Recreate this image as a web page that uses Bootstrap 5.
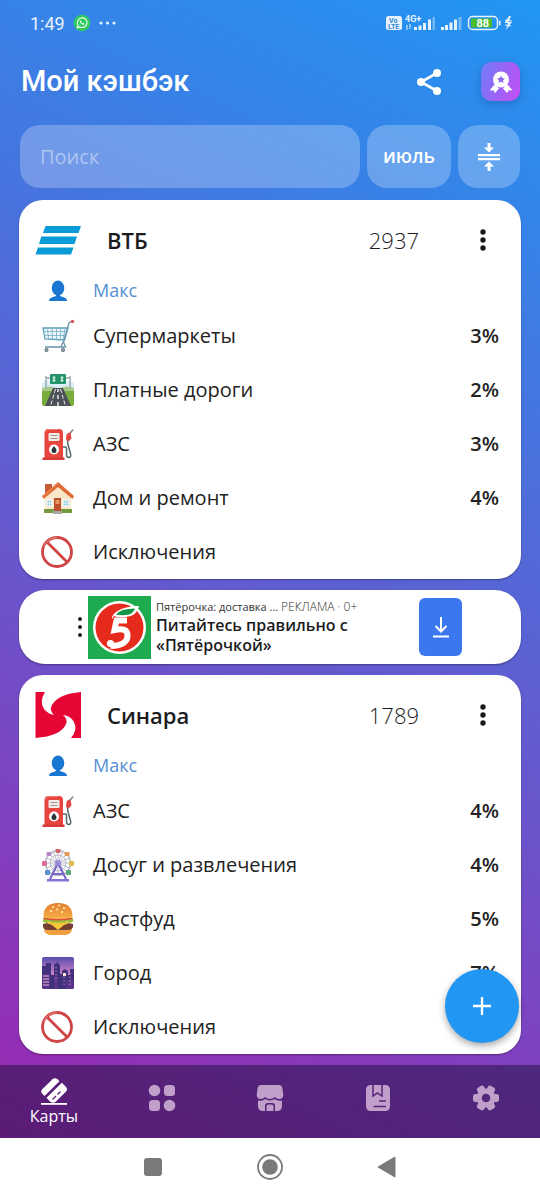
<!DOCTYPE html>
<html lang="ru">
<head>
<meta charset="utf-8">
<meta name="viewport" content="width=device-width, initial-scale=1">
<title>Мой кэшбэк</title>
<link href="https://cdn.jsdelivr.net/npm/bootstrap@5.3.0/dist/css/bootstrap.min.css" rel="stylesheet">
<style>
  body { font-family: "Open Sans", "Noto Sans", sans-serif; color: #1c1c1e; background: #fff; }
  svg { display: block; flex: none; }
  .app-shell { background: linear-gradient(205deg, #2196f3, #9c27b0); }
  .status-bar { height: 46px; padding: 0 26px 0 30px; font-family: Roboto, sans-serif; font-size: 18px; color: #e6f3fd; }
  .app-header { padding: 16px 20px 24px 21px; }
  .app-title { font-family: Roboto, sans-serif; font-weight: 500; font-size: 29px; line-height: 39px; color: #fff; }
  .award-btn { width: 39px; height: 39px; border-radius: 10px; background: linear-gradient(110deg, #6f7cfa, #c44df2); box-shadow: 0 3px 8px rgba(20,50,120,.3); }
  .tool-row { padding: 0 20px; gap: 7px; }
  .glass { height: 63px; border: 0; border-radius: 20px; background: rgba(255,255,255,.25); color: #fff; }
  .glass-input { padding: 0 20px; font-size: 20px; }
  .glass-input::placeholder { color: rgba(255,255,255,.45); }
  .glass-input:focus { outline: 2px solid #fff; }
  .month-btn { width: 84px; font-size: 19px; font-weight: 600; }
  .sort-btn { width: 62px; }
  .feed { padding: 12px 19px 11px; gap: 11px; }
  .panel { background: #fff; border-radius: 24px; box-shadow: 0 1px 2px rgba(0,0,0,.35); }
  .panel-head { padding: 16px 16px 8px; }
  .bank-logo { width: 48px; height: 48px; margin-right: 24px; }
  .bank-name { font-size: 22px; font-weight: 600; line-height: 48px; }
  .card-num { font-size: 22px; font-weight: 300; margin-right: 42px; }
  .menu-btn { width: 44px; height: 44px; }
  .line-row { padding: 0 22px; height: 54px; font-size: 20px; color: #222; }
  .line-row svg { width: 34px; height: 34px; margin-right: 18px; }
  .owner-row { height: 37px; font-size: 18px; color: #5590d4; }
  .owner-row svg { width: 34px; height: 22px; }
  .rate { font-size: 20px; font-weight: 600; }
  .ad-panel { height: 74px; padding: 0 59px 0 57px; border-radius: 26px; }
  .ad-text { margin: 0 0 0 5px; line-height: 20px; }
  .ad-source { font-size: 11px; line-height: 16px; color: #333; }
  .ad-mark { font-size: 12px; font-weight: 300; }
  .ad-head { font-size: 16px; font-weight: 600; line-height: 20px; color: #1c1c1e; }
  .ad-get { width: 43px; height: 58px; border-radius: 6px; background: #3b78f0; }
  .fab { right: 21px; bottom: 22px; width: 74px; height: 74px; background: #2196f3; box-shadow: 0 3px 7px rgba(0,0,0,.35); }
  .tab-bar { height: 73px; background: rgba(28,15,60,.5); }
  .tab-bar a { color: #c0a0ca; font-size: 16px; line-height: 22px; }
  .tab-bar a.active { color: #fff; }
  .tab-gap { padding-bottom: 8px; }
  .system-bar { height: 62px; background: #fff; padding: 0 94px 4px; }
</style>
</head>
<body class="min-vh-100 d-flex flex-column">

<svg width="0" height="0" class="position-absolute" aria-hidden="true">
  <defs>
    <linearGradient id="bun" x1="0" y1="0" x2="0" y2="1"><stop offset="0" stop-color="#e07e2c"/><stop offset="1" stop-color="#f8b14b"/></linearGradient>
    <linearGradient id="dusk" x1="0" y1="0" x2="0" y2="1"><stop offset="0" stop-color="#5a4cb0"/><stop offset=".5" stop-color="#c67fc4"/><stop offset="1" stop-color="#f08a8a"/></linearGradient>
  </defs>
  <symbol id="person" viewBox="0 0 34 22"><ellipse cx="17" cy="8" rx="6.3" ry="7.6" fill="#1976d2"/><path d="M8 21q0-3 4-4l3-1v-3h4v3l3 1q4 1 4 4z" fill="#1976d2"/></symbol>
  <symbol id="cart" viewBox="0 0 34 34">
    <path d="M2 9h25l-3.500 12L4 20z" fill="#eef8fc" stroke="#5c9fba" stroke-width="1.300"/>
    <path d="M6.500 9l1 11M11 9l.6 11M15.500 9v11.500M20 9l-.8 12M24 9l-2 12M2.500 12.500H26M3 16.500h22" stroke="#7db4ca" stroke-width=".9" fill="none"/>
    <path d="M31 2l-3 2-5.500 19 2 5H4M22 23l-2 5" fill="none" stroke="#6a93a8" stroke-width="1.300"/>
    <circle cx="31.500" cy="2.500" r="1.700" fill="#d4545f"/><circle cx="5.500" cy="31" r="2" fill="#58707c"/><circle cx="22" cy="31" r="2" fill="#58707c"/><circle cx="5.500" cy="31" r=".8" fill="#dde"/><circle cx="22" cy="31" r=".8" fill="#dde"/>
  </symbol>
  <symbol id="road" viewBox="0 0 34 34">
    <path d="M1 15h32v16q0 2-2 2H3q-2 0-2-2z" fill="#79ad3e"/><path d="M1 10q3-4 8-2l16 1q5-2 8 1v5H1z" fill="#d9eef7"/>
    <path d="M1 15q8-3 14 0h4q7-3 14 0v3H1z" fill="#a9c98c"/>
    <path d="M12 15h10l8 18H4z" fill="#4c5258"/><path d="M17 16v3m0 3v4m0 3v4" stroke="#fff" stroke-width="1.300"/><path d="M14.500 16L9.500 33M19.500 16l5 17" stroke="#fff" stroke-width=".9" stroke-dasharray="4 2"/>
    <path d="M5 3v12M29 3v12M5 5h5m14 0h5" stroke="#9aa5ad" stroke-width="1.400"/>
    <rect x="9" y="1" width="16" height="10" rx="1" fill="#24936a"/><path d="M13 3v6M21 3v6M11.500 5h3M19.500 5h3M11.500 7.500h3M19.500 7.500h3" stroke="#dff5ea" stroke-width="1.200"/>
  </symbol>
  <symbol id="fuel" viewBox="0 0 34 34">
    <path d="M22 20h2.500q1 0 1 1.500v6q0 3 2.200 3t2-3L26.800 17l-.3-5" fill="none" stroke="#566970" stroke-width="1.500"/>
    <path d="M27 9l5-6.500" stroke="#7c898e" stroke-width="1.500"/><path d="M25.500 8q1-3 4-2.500l1 6-3 3-2.500-2z" fill="#de4840"/>
    <path d="M3.500 6q0-4 4-4h10.500q4 0 4 4v25h-18.500z" fill="#e8453f"/><path d="M1.500 30.500h22V33h-22z" fill="#d63a36"/><path d="M4 6q.5-3.500 4-3.500h9" fill="none" stroke="#f77a70" stroke-width="1"/>
    <rect x="7.500" y="6" width="11" height="8" rx="1" fill="#f3ece8"/><path d="M9.500 8.500h7m-7 3h7" stroke="#a49490"/>
    <circle cx="13" cy="22.500" r="5" fill="#fff"/><path d="M13 19q2.500 3 2.500 4.500a2.500 2.500 0 0 1-5 0q0-1.500 2.500-4.500z" fill="#29343a"/>
  </symbol>
  <symbol id="house" viewBox="0 0 34 34">
    <path d="M4 3h7v9H4z" fill="#c85b38"/><path d="M4 15L17 4l13 11v14H4z" fill="#f8e8c9"/>
    <path d="M17 1L1 15l1.500 3L17 6l14.500 12 1.500-3z" fill="#e06a35"/><path d="M17 2L2 15.500" stroke="#f59a62" fill="none"/>
    <path d="M3 28h28v4H3z" fill="#739a3c"/><rect x="13" y="17" width="7" height="14" fill="#ba5030"/><path d="M14.500 19h4v4h-4z" fill="#e7965f"/>
    <path d="M6 19h5v6H6zM22 19h6v6h-6z" fill="#91cce1" stroke="#fff"/><path d="M8.500 19v6M25 19v6M6 22h5M22 22h6" stroke="#fff" stroke-width=".7"/>
    <path d="M12 30h9v3h-9z" fill="#aaa8a6"/>
  </symbol>
  <symbol id="ban" viewBox="0 0 34 34"><g fill="none" stroke="#cf4545" stroke-width="2.800"><circle cx="16" cy="17" r="14.500"/><path d="M5.700 6.700l20.600 20.600"/></g><path d="M3 12A14.500 14.500 0 0 1 16 2.500" fill="none" stroke="#e88c87" stroke-width="1"/></symbol>
  <symbol id="wheel" viewBox="0 0 34 34">
    <g fill="none" stroke="#b9b9ca" stroke-width="1"><circle cx="17" cy="15" r="12.500" stroke-width="1.500"/><circle cx="17" cy="15" r="8"/><path d="M17 2v26M4 15h26M8 6l18 18M26 6L8 24M12 3.500l10 23M22 3.500l-10 23M5.500 10l23 10M5.500 20l23-10"/></g>
    <g><rect x="14.500" y="1" width="5" height="4" rx="1" fill="#d26866"/><rect x="23.500" y="4" width="5" height="4" rx="1" fill="#e09955"/><rect x="5.500" y="4" width="5" height="4" rx="1" fill="#b387c8"/><rect x="1" y="13" width="5" height="5" rx="1" fill="#dc6c92"/><rect x="28" y="13" width="5" height="5" rx="1" fill="#dfbd4f"/><rect x="4" y="22" width="5" height="5" rx="1" fill="#5c8ed0"/><rect x="25" y="22" width="5" height="5" rx="1" fill="#59a879"/></g>
    <path d="M17 15L9 31M17 15l8 16M12 26h10" fill="none" stroke="#7a67c8" stroke-width="2.200"/><path d="M6 31h22v2.500H6z" fill="#8873d2"/><circle cx="17" cy="15" r="3" fill="#9a8adb"/>
  </symbol>
  <symbol id="burger" viewBox="0 0 34 34">
    <path d="M3 26h28q0 7-7 7H10q-7 0-7-7z" fill="#f2a03f"/><path d="M2 22q15-5 30 0v3q-1 3-5 3H7q-4 0-5-3z" fill="#744034"/>
    <path d="M3 20h28l-8 3-6 5-6-5z" fill="#fcc83a"/><path d="M2 17q15-4 30 0 1 3-2 3.500-2 0-4-1-3 2-6 1-3 1-6 0-3 1-6-1-2 1.500-4 1-3-.5-2-3.500z" fill="#99bd3c"/>
    <path d="M2.500 17q15 3 29 0v-1.500h-29z" fill="#dc4e38"/><path d="M2.500 15.500Q2 1 17 1t14.500 14.500q-14 3-29 0z" fill="url(#bun)"/>
    <g fill="#ffe5a6"><ellipse cx="12" cy="5" rx="1.300" ry=".9"/><ellipse cx="18" cy="3.500" rx="1.300" ry=".9"/><ellipse cx="23" cy="6" rx="1.300" ry=".9"/><ellipse cx="10" cy="9" rx="1.300" ry=".9"/><ellipse cx="16" cy="7.500" rx="1.300" ry=".9"/><ellipse cx="21" cy="10" rx="1.300" ry=".9"/></g>
  </symbol>
  <symbol id="city" viewBox="0 0 34 34">
    <rect x="1" y="1" width="32" height="32" rx="2" fill="url(#dusk)"/><path d="M1 10h4v-3h5v12h3V9l3-3 3 3v9h2v-3l3-2 3 2v4h2v-6h4v18q0 2-2 2H3q-2 0-2-2z" fill="#41307c"/>
    <path d="M1 18h8v15H3q-2 0-2-2zM13 20h4v13h-4zM25 24h8v7q0 2-2 2h-6z" fill="#57348a"/>
    <path d="M2 20h6m-6 3h6m-6 3h6m-6 3h6" stroke="#efb6d0" stroke-width="1"/><path d="M15 11v15M23 17v12M29 17v12" stroke="#bb85bb" stroke-dasharray="1.500 2"/><path d="M22 17h3v3h-3z" fill="#ffe0c8"/>
  </symbol>
  <symbol id="dots" viewBox="0 0 8 24"><circle cx="4" cy="4" r="2.700"/><circle cx="4" cy="12" r="2.700"/><circle cx="4" cy="20" r="2.700"/></symbol>
</svg>

<div class="app-shell flex-grow-1 d-flex flex-column">
  <div class="status-bar d-flex align-items-center justify-content-between">
    <div class="d-flex align-items-center">
      <span>1:49</span>
      <svg class="ms-2" width="18" height="18" viewBox="0 0 18 18"><circle cx="9" cy="9" r="8.300" fill="#2ecc5f"/><path d="M4.300 13.700l.8-2.600a4.800 4.800 0 1 1 1.900 1.800z" fill="none" stroke="#fff" stroke-width="1.100"/><path d="M7.200 6.400q-1 .9.300 2.600t3.200 1.900l.9-1-1.500-.9-.8.600-1.300-1.500.5-.7z" fill="#fff"/></svg>
      <svg class="ms-2" width="17" height="4" viewBox="0 0 17 4" fill="#e6f3fd"><circle cx="2" cy="2" r="1.600"/><circle cx="8.500" cy="2" r="1.600"/><circle cx="15" cy="2" r="1.600"/></svg>
    </div>
    <svg width="130" height="20" viewBox="0 0 130 20" fill="#e6f3fd" font-family="Roboto, sans-serif" font-weight="700">
      <rect x="2" y="3" width="16" height="14" rx="2.500"/><text x="5" y="9.500" font-size="7" fill="#3489dc">Vo</text><text x="4" y="16" font-size="7" fill="#3489dc">LTE</text>
      <text x="21" y="9" font-size="9">4G+</text>
      <path d="M23 12v5M26 11v5" stroke="#e6f3fd" stroke-width="1"/><path d="M30 14h3v3h-3zM34.500 12.500h3V17h-3zM39 10h3v7h-3zM44 6.500h3V17h-3z"/><path d="M48.500 4h2.500v13h-2.500z" opacity=".4"/>
      <path d="M57 14h3v3h-3zM61 12h3v5h-3zM65.500 9.500h3V17h-3zM70 6.500h3V17h-3z"/><path d="M74.500 4h3v13h-3z" opacity=".4"/>
      <rect x="84.500" y="3.500" width="29" height="13" rx="4" fill="none" stroke="#e6f3fd" stroke-width="1.500"/><rect x="87" y="5.500" width="21" height="9" rx="1" fill="#4bbb2e"/><rect x="115" y="7.500" width="1.500" height="5" rx=".7"/>
      <text x="92.500" y="14" font-size="11" fill="#fff">88</text><path d="M125 3l-4.500 7h3.500l-2 7 6-8h-3.500l2.500-6z"/><path d="M121 7l7 1M121 12l6 1" stroke="#e6f3fd"/>
    </svg>
  </div>

  <header class="app-header d-flex align-items-center">
    <h1 class="app-title m-0 flex-grow-1">Мой кэшбэк</h1>
    <button type="button" class="btn p-0 border-0 me-4" aria-label="Поделиться">
      <svg class="me-3" width="24" height="28" viewBox="1 0 24 28" fill="#fff"><path d="M21 5L5 14l16 9" fill="none" stroke="#fff" stroke-width="2.600"/><circle cx="21" cy="5" r="4"/><circle cx="5" cy="14" r="4"/><circle cx="21" cy="23" r="4"/></svg>
    </button>
    <button type="button" class="btn award-btn p-0 border-0 d-flex align-items-center justify-content-center" aria-label="Награды">
      <svg width="24" height="24" viewBox="0 0 24 24" fill="#fff"><path d="M5.500 15l4 3.500-3.500 4-1.200-2.700-3.300.2zM18.500 15l-4 3.500 3.500 4 1.200-2.700 3.300.2z" stroke="#fff" stroke-linejoin="round"/><circle cx="12" cy="9.500" r="8"/><path d="M12 5.500l1.200 2.500 2.800.4-2 1.900.5 2.700-2.500-1.300L9.500 13l.5-2.700-2-1.900 2.800-.4z" fill="#9468f4"/></svg>
    </button>
  </header>

  <div class="tool-row d-flex">
    <input type="search" class="glass glass-input flex-grow-1 w-100" placeholder="Поиск" aria-label="Поиск">
    <button type="button" class="btn glass month-btn p-0 flex-shrink-0">июль</button>
    <button type="button" class="btn glass sort-btn p-0 flex-shrink-0 d-flex align-items-center justify-content-center" aria-label="Свернуть карты">
      <svg width="22" height="28" viewBox="0 0 22 28" fill="#fff"><path d="M0 11h22v2.300H0zM0 15h22v2.300H0zM9.500 0h3v4.500H16L11 9.500 6 4.500h3.500zM9.500 28h3v-4.500H16L11 18.500l-5 5h3.500z"/></svg>
    </button>
  </div>

  <main class="feed flex-grow-1 d-flex flex-column position-relative">
    <section class="panel">
      <div class="panel-head d-flex align-items-center">
        <svg class="bank-logo" viewBox="0 0 48 48" fill="#089bd7"><path d="M10.500 10H46l-2.500 7H8zM6.300 20.500H42L39.500 28H4zM3 31.500h35.500L36 38.500H.5z"/></svg>
        <h2 class="bank-name m-0 flex-grow-1">ВТБ</h2>
        <span class="card-num">2937</span>
        <button type="button" class="btn menu-btn p-0 border-0 d-flex align-items-center justify-content-center" aria-label="Меню карты ВТБ"><svg width="8" height="24" fill="#1c1c1e"><use href="#dots"/></svg></button>
      </div>
      <div class="line-row owner-row d-flex align-items-center"><svg><use href="#person"/></svg>Макс</div>
      <ul class="list-unstyled m-0">
        <li class="line-row d-flex align-items-center"><svg><use href="#cart"/></svg><span class="flex-grow-1">Супермаркеты</span><span class="rate">3%</span></li>
        <li class="line-row d-flex align-items-center"><svg><use href="#road"/></svg><span class="flex-grow-1">Платные дороги</span><span class="rate">2%</span></li>
        <li class="line-row d-flex align-items-center"><svg><use href="#fuel"/></svg><span class="flex-grow-1">АЗС</span><span class="rate">3%</span></li>
        <li class="line-row d-flex align-items-center"><svg><use href="#house"/></svg><span class="flex-grow-1">Дом и ремонт</span><span class="rate">4%</span></li>
        <li class="line-row d-flex align-items-center"><svg><use href="#ban"/></svg><span class="flex-grow-1">Исключения</span></li>
      </ul>
    </section>

    <section class="panel ad-panel d-flex align-items-center">
      <button type="button" class="btn p-0 border-0 me-1" aria-label="Меню рекламы"><svg width="8" height="24" viewBox="0 0 8 24" fill="#1c1c1e"><circle cx="4" cy="4" r="2"/><circle cx="4" cy="12" r="2"/><circle cx="4" cy="20" r="2"/></svg></button>
      <svg width="63" height="63" viewBox="0 0 63 63"><path d="M0 0h63v63H0z" fill="#1eaa4e"/><circle cx="31.500" cy="31.500" r="26.500" fill="#fff"/><circle cx="31.500" cy="31.500" r="24" fill="#e62b1c"/>
        <path d="M39 24.500H28.500L26.500 34q13-3 13 5.500 0 10-17 10.500" fill="none" stroke="#fff" stroke-width="6"/><circle cx="22.500" cy="47.500" r="3.600" fill="#fff"/>
        <path d="M24 21q4-9 23-11h4q-2 10-13 11-8 1-12-1l-2 3z" fill="#fff"/><path d="M28 18.500q4-6 19-6-2 6-9 6.500-6 .5-10-.5z" fill="#159447"/></svg>
      <div class="ad-text flex-grow-1">
        <div class="ad-source text-nowrap">Пятёрочка: доставка ... <span class="ad-mark">РЕКЛАМА · 0+</span></div>
        <div class="ad-head">Питайтесь правильно с<br>«Пятёрочкой»</div>
      </div>
      <button type="button" class="btn ad-get p-0 border-0 flex-shrink-0 d-flex align-items-center justify-content-center" aria-label="Скачать"><svg width="18" height="22" viewBox="0 0 18 22" fill="none" stroke="#fff" stroke-width="2"><path d="M9 1v14M3.500 10L9 15.500l5.500-5.500M1 20.500h16"/></svg></button>
    </section>

    <section class="panel">
      <div class="panel-head d-flex align-items-center">
        <svg class="bank-logo" viewBox="0 0 48 48" fill="#e50635"><path d="M.5 1H10Q4 11 9 18 13 23 19 24 14 19 17 14 23 3 46 1V47H36Q43 39 39 31 36 25 28 24 33 28 31 33 26 45 .5 47Z"/></svg>
        <h2 class="bank-name m-0 flex-grow-1">Синара</h2>
        <span class="card-num">1789</span>
        <button type="button" class="btn menu-btn p-0 border-0 d-flex align-items-center justify-content-center" aria-label="Меню карты Синара"><svg width="8" height="24" fill="#1c1c1e"><use href="#dots"/></svg></button>
      </div>
      <div class="line-row owner-row d-flex align-items-center"><svg><use href="#person"/></svg>Макс</div>
      <ul class="list-unstyled m-0">
        <li class="line-row d-flex align-items-center"><svg><use href="#fuel"/></svg><span class="flex-grow-1">АЗС</span><span class="rate">4%</span></li>
        <li class="line-row d-flex align-items-center"><svg><use href="#wheel"/></svg><span class="flex-grow-1">Досуг и развлечения</span><span class="rate">4%</span></li>
        <li class="line-row d-flex align-items-center"><svg><use href="#burger"/></svg><span class="flex-grow-1">Фастфуд</span><span class="rate">5%</span></li>
        <li class="line-row d-flex align-items-center"><svg><use href="#city"/></svg><span class="flex-grow-1">Город</span><span class="rate">7%</span></li>
        <li class="line-row d-flex align-items-center"><svg><use href="#ban"/></svg><span class="flex-grow-1">Исключения</span></li>
      </ul>
    </section>

    <button type="button" class="btn fab p-0 border-0 rounded-circle position-absolute d-flex align-items-center justify-content-center" aria-label="Добавить карту"><svg width="18" height="18" viewBox="0 0 18 18" stroke="#fff" stroke-width="2.300"><path d="M9 0v18M0 9h18"/></svg></button>
  </main>

  <nav class="tab-bar d-flex">
    <a href="#" class="active w-100 text-decoration-none d-flex flex-column align-items-center justify-content-center">
      <svg width="28" height="28" viewBox="0 0 28 28" fill="#fff"><path d="M1 26h26v1.800H1z"/><path d="M2.500 12L12.500 2.200q2.500-2 5 0l2 2L4.500 19l-2-2q-2.500-2.500 0-5z"/><path d="M6.500 20.800L21.800 5.700l4 4q2.500 2.500 0 5L15.500 25q-2.500 1.500-5 0z"/><path d="M12.500 22.500l3.500-3.500M17.500 17.500l3-3" stroke="#5f2078" stroke-width="1.400"/></svg>
      <span>Карты</span>
    </a>
    <a href="#" class="tab-gap w-100 d-flex align-items-center justify-content-center" aria-label="Категории"><svg width="28" height="28" viewBox="0 0 28 28" fill="#c0a0ca"><circle cx="6.500" cy="6.500" r="5.800"/><rect x="16" y="1" width="11" height="11" rx="3.500"/><rect x="1" y="16" width="11" height="11" rx="3.500"/><circle cx="21.500" cy="21.500" r="5.800"/></svg></a>
    <a href="#" class="tab-gap w-100 d-flex align-items-center justify-content-center" aria-label="Магазины"><svg width="28" height="28" viewBox="0 0 28 28" fill="#c0a0ca"><path d="M5 1h18q3 0 3.500 4l.8 6q-.3 4-4 4-2.800 0-4.500-2Q17 15 14 15t-4.800-2q-1.700 2-4.500 2-3.700 0-4-4l.8-6Q2 1 5 1z"/><path d="M2 16.500q4 1 7.500-1.500Q14 18 18.500 15q3.500 2.500 7.500 1.500V22q0 5-5 5h-2v-5q0-3-3-3h-4q-3 0-3 3v5H7q-5 0-5-5z"/><path d="M10.500 27v-4.500q0-2 2-2h3q2 0 2 2V27z"/></svg></a>
    <a href="#" class="tab-gap w-100 d-flex align-items-center justify-content-center" aria-label="Справочник"><svg width="28" height="28" viewBox="0 0 28 28"><path d="M7 1h14q5 0 5 5v16q0 5-5 5H7q-5 0-5-5V6q0-5 5-5z" fill="#c0a0ca"/><path d="M9 1v11l4.500-3L18 12V1M15 17h7M9.500 22.500H22" fill="none" stroke="#582378" stroke-width="1.500"/></svg></a>
    <a href="#" class="tab-gap w-100 d-flex align-items-center justify-content-center" aria-label="Настройки"><svg width="28" height="28" viewBox="0 0 28 28"><g fill="#c0a0ca"><circle cx="14" cy="14" r="9.500"/><rect x="10" y="1" width="8" height="26" rx="2.500" transform="rotate(30 14 14)"/><rect x="10" y="1" width="8" height="26" rx="2.500" transform="rotate(90 14 14)"/><rect x="10" y="1" width="8" height="26" rx="2.500" transform="rotate(150 14 14)"/></g><circle cx="14" cy="14" r="4.300" fill="#56287c"/></svg></a>
  </nav>
</div>

<footer class="system-bar d-flex align-items-center" aria-label="Системная навигация">
  <button type="button" class="btn p-0 border-0 w-100 d-flex justify-content-center" aria-label="Недавние"><svg width="20" height="20"><rect x="1" y="1" width="18" height="18" rx="3" fill="#7a7a7a"/></svg></button>
  <button type="button" class="btn p-0 border-0 w-100 d-flex justify-content-center" aria-label="Домой"><svg width="28" height="28"><circle cx="14" cy="14" r="12" fill="none" stroke="#7a7a7a" stroke-width="1.800"/><circle cx="14" cy="14" r="7.800" fill="#7a7a7a"/></svg></button>
  <button type="button" class="btn p-0 border-0 w-100 d-flex justify-content-center" aria-label="Назад"><svg width="20" height="22"><path d="M1 11L18 1v20z" fill="#7a7a7a" stroke="#7a7a7a" stroke-linejoin="round"/></svg></button>
</footer>

<script src="https://cdn.jsdelivr.net/npm/bootstrap@5.3.0/dist/js/bootstrap.bundle.min.js"></script>
</body>
</html>
